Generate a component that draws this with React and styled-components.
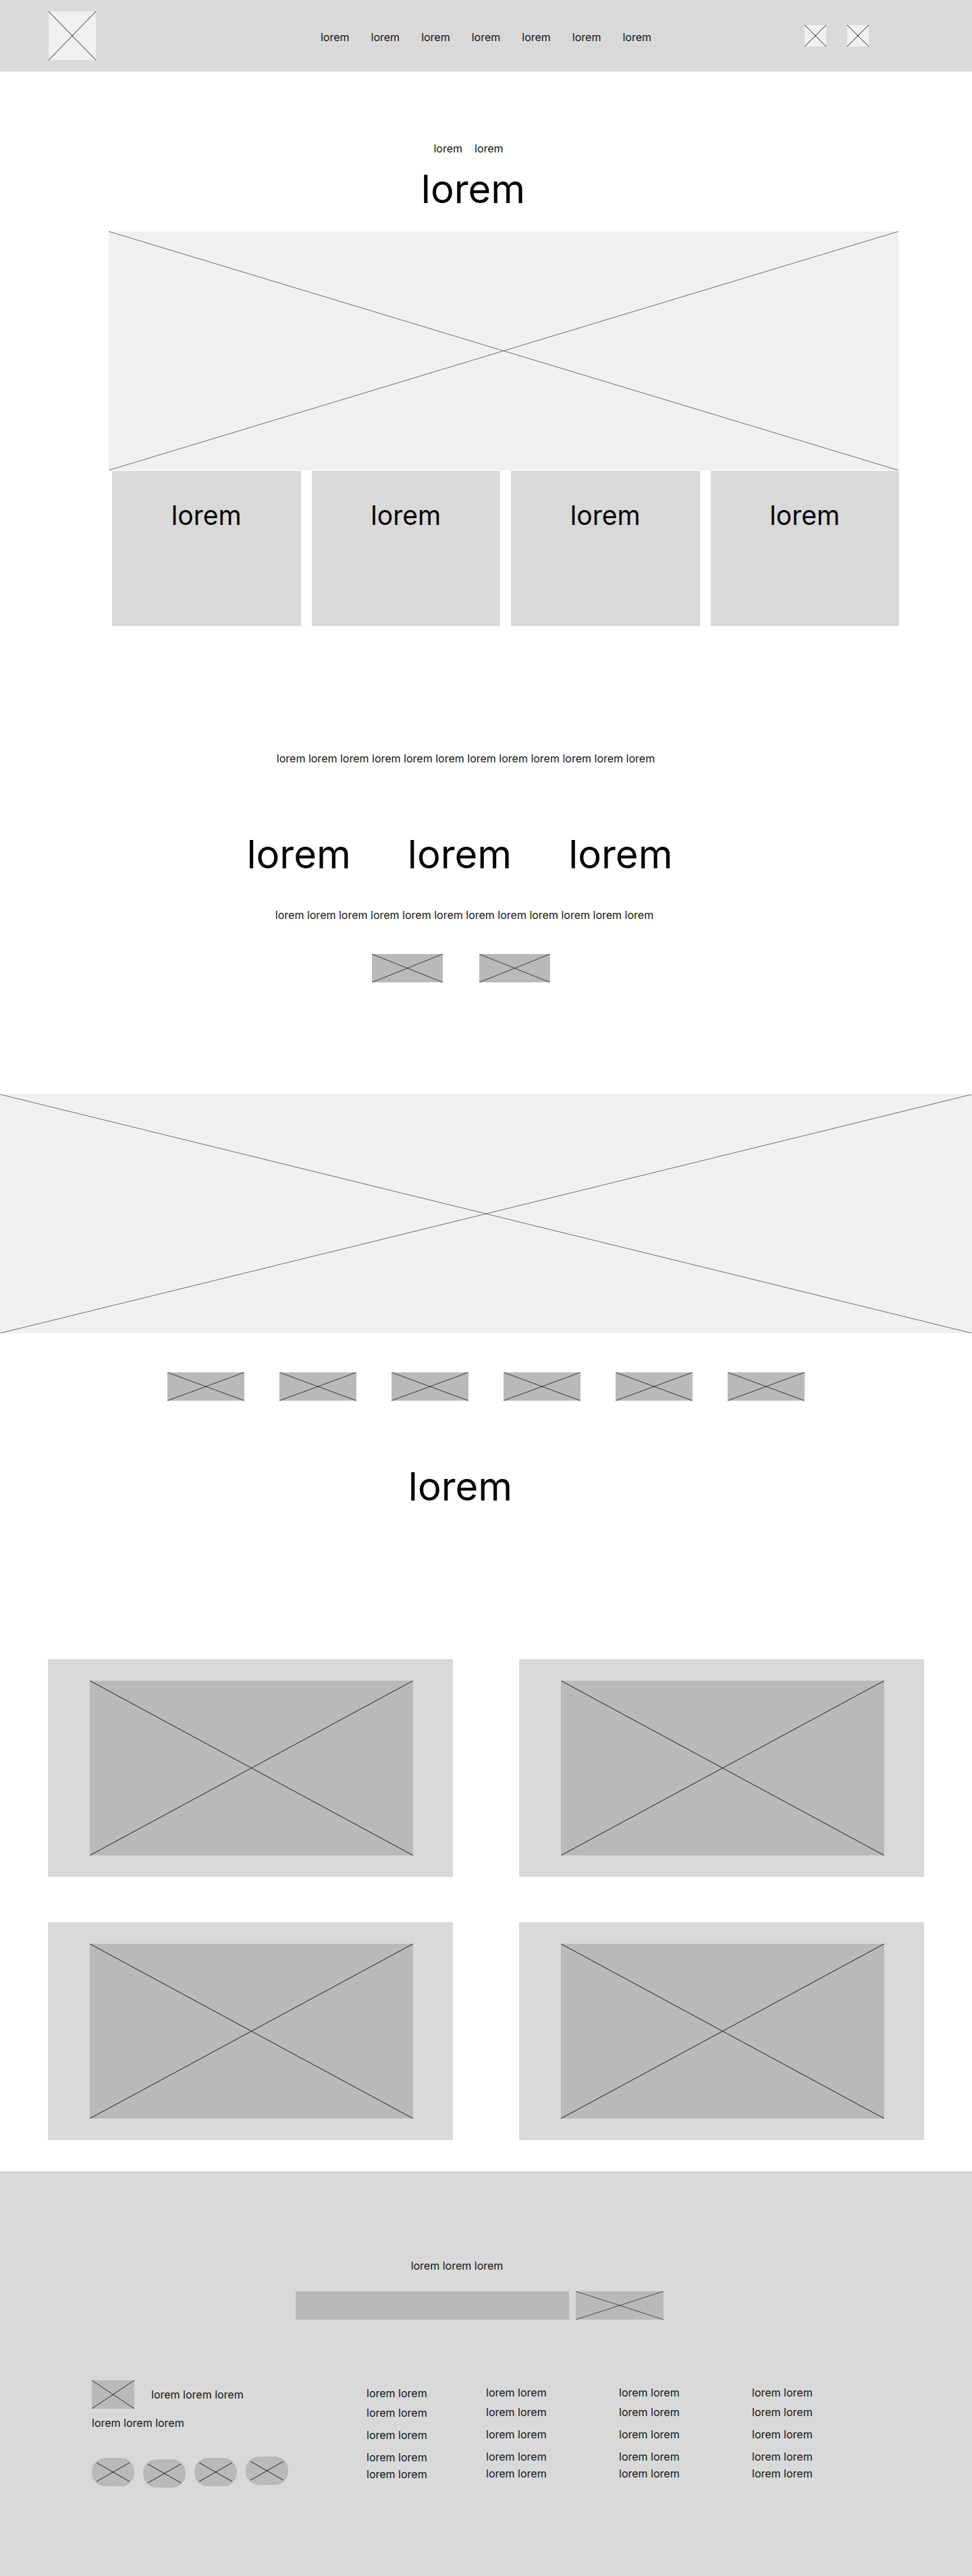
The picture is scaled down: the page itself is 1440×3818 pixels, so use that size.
import React from "react";
import styled, { createGlobalStyle } from "styled-components";

const GlobalStyle = createGlobalStyle`
  * { box-sizing: border-box; }
  body {
    margin: 0;
    background: #fff;
    color: #111;
    font-family: Inter, "Noto Sans", sans-serif;
  }
`;

// X drawn across a placeholder box
function Cross({ color = "#333" }) {
  return (
    <svg width="100%" height="100%" viewBox="0 0 100 100" preserveAspectRatio="none">
      <line x1="0" y1="0" x2="100" y2="100" stroke={color} strokeWidth="1" vectorEffect="non-scaling-stroke" />
      <line x1="100" y1="0" x2="0" y2="100" stroke={color} strokeWidth="1" vectorEffect="non-scaling-stroke" />
    </svg>
  );
}

const Placeholder = styled.div`
  flex-shrink: 0;
  width: ${p => p.$w || "100%"};
  height: ${p => p.$h};
  background: ${p => p.$bg || "#b9b9b9"};
  svg { display: block; }
`;

const Header = styled.header`
  height: 106px;
  background: #d9d9d9;
  display: grid;
  grid-template-columns: 1fr auto 1fr;
  align-items: center;
  padding: 0 72px;
`;

const Nav = styled.nav`
  display: flex;
  gap: 32px;
  font-size: 16px;
  line-height: 20px;
  padding-top: 3px;
`;

const NavIcons = styled.div`
  justify-self: end;
  display: flex;
  gap: 31px;
  margin-right: 81px;
`;

const Hero = styled.section`
  padding-top: 104px;
`;

const Breadcrumb = styled.div`
  display: flex;
  justify-content: center;
  gap: 18px;
  padding-right: 52px;
  font-size: 16px;
  line-height: 20px;
`;

const BigTitle = styled.h1`
  margin: ${p => p.$mt || "0"} 0 0;
  padding-right: ${p => p.$pr || "0"};
  font-size: 58px;
  font-weight: 400;
  line-height: 58px;
  text-align: center;
  color: #000;
`;

const HeroMedia = styled.div`
  width: 1171px;
  margin: 34px 0 0 161px;
`;

const FeatureRow = styled.div`
  display: flex;
  gap: 16px;
  padding-left: 5px;
  margin-top: 1px;
`;

const FeatureCard = styled.div`
  flex: 1;
  height: 230px;
  background: #d9d9d9;
  padding-top: 46px;
  text-align: center;
  font-size: 39px;
  line-height: 39px;
  color: #000;
`;

const Intro = styled.section`
  width: 1366px;
  padding-top: 186px;
  display: flex;
  flex-direction: column;
  align-items: center;
`;

const Lead = styled.p`
  margin: ${p => p.$mt || "0"} 0 0;
  padding-left: ${p => p.$pl || "0"};
  font-size: 16px;
  line-height: 20px;
`;

const StatRow = styled.div`
  display: flex;
  gap: 84px;
  margin-top: 103px;
  padding-right: 4px;
  font-size: 58px;
  line-height: 58px;
  color: #000;
`;

const ButtonRow = styled.div`
  display: flex;
  gap: 54px;
  margin-top: 48px;
`;

const Banner = styled.div`
  margin-top: 166px;
`;

const ThumbRow = styled.div`
  display: flex;
  justify-content: center;
  gap: 52px;
  margin-top: 58px;
`;

const Gallery = styled.section`
  display: grid;
  grid-template-columns: 600px 600px;
  column-gap: 98px;
  row-gap: 67px;
  padding-left: 71px;
  margin-top: 227px;
`;

const GalleryCard = styled.div`
  height: 323px;
  background: #d9d9d9;
  padding: 32px 59px 32px 62px;
`;

const Footer = styled.footer`
  margin-top: 46px;
  height: 600px;
  background: #d9d9d9;
  padding-top: 130px;
`;

const Signup = styled.p`
  margin: 0;
  padding-right: 86px;
  text-align: center;
  font-size: 16px;
  line-height: 20px;
`;

const SignupForm = styled.div`
  display: flex;
  justify-content: center;
  gap: 10px;
  margin-top: 28px;
  padding-right: 20px;
`;

const FooterBottom = styled.div`
  display: flex;
  margin-top: 90px;
  padding-left: 136px;
`;

const Brand = styled.div`
  width: 407px;
  font-size: 16px;
  line-height: 20px;
`;

const BrandRow = styled.div`
  display: flex;
  align-items: center;
  gap: 25px;
`;

const BrandText = styled.div`
  margin-top: 11px;
`;

const Socials = styled.div`
  display: flex;
  align-items: flex-start;
  gap: 13px;
  margin-top: 40px;
`;

const Pill = styled.div`
  width: 63px;
  height: 42px;
  border-radius: 20px;
  background: #b9b9b9;
  padding: 7px;
  margin-top: ${p => p.$shift || 0}px;
  svg { display: block; }
`;

const LinkColumn = styled.ul`
  list-style: none;
  margin: ${p => (p.$first ? 9 : 8)}px 0 0;
  padding: 0;
  width: ${p => p.$w || "auto"};
  font-size: 16px;
  line-height: 20px;
  li:nth-child(2) { margin-top: 9px; }
  li:nth-child(3) { margin-top: 13px; }
  li:nth-child(4) { margin-top: 13px; }
  li:nth-child(5) { margin-top: 5px; }
`;

const navItems = Array(7).fill("lorem");
const features = Array(4).fill("lorem");
const words = Array(12).fill("lorem").join(" ");
const columns = [
  { w: "177px", first: true },
  { w: "197px" },
  { w: "197px" },
  { w: "auto" },
];

export default function App() {
  return (
    <>
      <GlobalStyle />
      <Header>
        <Placeholder $w="70px" $h="72px" $bg="#f0f0f0">
          <Cross color="#222" />
        </Placeholder>
        <Nav>
          {navItems.map((item, i) => (
            <span key={i}>{item}</span>
          ))}
        </Nav>
        <NavIcons>
          <Placeholder $w="32px" $h="32px" $bg="#f0f0f0">
            <Cross color="#222" />
          </Placeholder>
          <Placeholder $w="32px" $h="32px" $bg="#f0f0f0">
            <Cross color="#222" />
          </Placeholder>
        </NavIcons>
      </Header>

      <Hero>
        <Breadcrumb>
          <span>lorem</span>
          <span>lorem</span>
        </Breadcrumb>
        <BigTitle $mt="21px" $pr="38px">lorem</BigTitle>
        <HeroMedia>
          <Placeholder $w="1170px" $h="354px" $bg="#f0f0f0">
            <Cross color="#6f6f6f" />
          </Placeholder>
          <FeatureRow>
            {features.map((f, i) => (
              <FeatureCard key={i}>{f}</FeatureCard>
            ))}
          </FeatureRow>
        </HeroMedia>
      </Hero>

      <Intro>
        <Lead $pl="14px">{words}</Lead>
        <StatRow>
          <span>lorem</span>
          <span>lorem</span>
          <span>lorem</span>
        </StatRow>
        <Lead $mt="51px" $pl="10px">{words}</Lead>
        <ButtonRow>
          <Placeholder $w="105px" $h="42px">
            <Cross color="#3a3a3a" />
          </Placeholder>
          <Placeholder $w="105px" $h="42px">
            <Cross color="#3a3a3a" />
          </Placeholder>
        </ButtonRow>
      </Intro>

      <Banner>
        <Placeholder $h="354px" $bg="#f0f0f0">
          <Cross color="#6f6f6f" />
        </Placeholder>
      </Banner>

      <ThumbRow>
        {Array.from({ length: 6 }).map((_, i) => (
          <Placeholder key={i} $w="114px" $h="42px">
            <Cross color="#3a3a3a" />
          </Placeholder>
        ))}
      </ThumbRow>

      <BigTitle $mt="98px" $pr="76px">lorem</BigTitle>

      <Gallery>
        {Array.from({ length: 4 }).map((_, i) => (
          <GalleryCard key={i}>
            <Placeholder $h="259px">
              <Cross color="#1e1e1e" />
            </Placeholder>
          </GalleryCard>
        ))}
      </Gallery>

      <Footer>
        <Signup>lorem lorem lorem</Signup>
        <SignupForm>
          <Placeholder $w="405px" $h="42px" />
          <Placeholder $w="130px" $h="42px">
            <Cross color="#4a4a4a" />
          </Placeholder>
        </SignupForm>
        <FooterBottom>
          <Brand>
            <BrandRow>
              <Placeholder $w="63px" $h="42px">
                <Cross color="#2a2a2a" />
              </Placeholder>
              <span>lorem lorem lorem</span>
            </BrandRow>
            <BrandText>lorem lorem lorem</BrandText>
            <Socials>
              {[0, 2, 0, -2].map((s, i) => (
                <Pill key={i} $shift={s + 2}>
                  <Cross color="#222" />
                </Pill>
              ))}
            </Socials>
          </Brand>
          {columns.map((c, i) => (
            <LinkColumn key={i} $w={c.w} $first={c.first}>
              {Array.from({ length: 5 }).map((_, j) => (
                <li key={j}>lorem lorem</li>
              ))}
            </LinkColumn>
          ))}
        </FooterBottom>
      </Footer>
    </>
  );
}
